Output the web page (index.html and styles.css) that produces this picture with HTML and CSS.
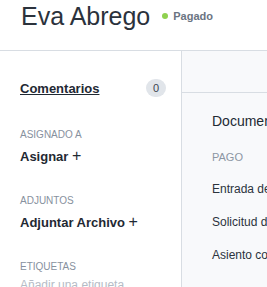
FILE: index.html
```html
<!DOCTYPE html>
<html lang="es">
<head>
    <meta charset="UTF-8">
    <title>Eva Abrego</title>
    <link rel="stylesheet" href="styles.css">
</head>
<body>
    <header class="page-header">
        <h1 class="page-title">Eva Abrego</h1>
        <span class="status"><span class="status-dot"></span>Pagado</span>
    </header>

    <div class="layout">
        <aside class="sidebar">
            <div class="comments-row">
                <a href="#" class="comments-link">Comentarios</a>
                <span class="badge">0</span>
            </div>

            <div class="side-section">
                <div class="side-label">ASIGNADO A</div>
                <a href="#" class="side-action">Asignar <span class="plus">+</span></a>
            </div>

            <div class="side-section">
                <div class="side-label">ADJUNTOS</div>
                <a href="#" class="side-action">Adjuntar Archivo <span class="plus">+</span></a>
            </div>

            <div class="side-section">
                <div class="side-label">ETIQUETAS</div>
                <div class="tag-placeholder">Añadir una etiqueta</div>
            </div>
        </aside>

        <main class="detail">
            <div class="detail-bar"></div>
            <div class="detail-body">
                <h2 class="detail-title">Documentos</h2>
                <div class="group-label">PAGO</div>
                <ul class="doc-list">
                    <li>Entrada de diario</li>
                    <li>Solicitud de pago</li>
                    <li>Asiento contable</li>
                </ul>
            </div>
        </main>
    </div>
</body>
</html>
```

FILE: styles.css
```css
html, body {
    margin: 0;
    padding: 0;
    font-family: "Liberation Sans", Arial, sans-serif;
    background-color: #fff;
    color: #1f2933;
    height: 100%;
    overflow: hidden;
}

.page-header {
    display: flex;
    align-items: center;
    height: 50px;
    padding: 0 0 0 21px;
    border-bottom: 1px solid #d8dde3;
    box-sizing: content-box;
}

.page-title {
    margin: 0;
    font-size: 25px;
    font-weight: 400;
    color: #2b323c;
    white-space: nowrap;
    position: relative;
    top: -9px;
}

.status {
    display: flex;
    align-items: center;
    margin-left: 12px;
    font-size: 11px;
    font-weight: 700;
    color: #6b7482;
    position: relative;
    top: -9px;
}

.status-dot {
    width: 6px;
    height: 6px;
    border-radius: 50%;
    background-color: #8fd14f;
    margin-right: 5px;
}

.layout {
    display: flex;
    height: 100%;
}

.sidebar {
    width: 182px;
    flex-shrink: 0;
    border-right: 1px solid #d8dde3;
    padding: 28px 15px 0 20px;
    box-sizing: border-box;
}

.comments-row {
    display: flex;
    align-items: center;
    justify-content: space-between;
    height: 18px;
}

.comments-link {
    font-size: 13px;
    font-weight: 700;
    color: #1f2933;
    text-decoration: underline;
}

.badge {
    min-width: 20px;
    height: 18px;
    line-height: 18px;
    border-radius: 9px;
    background-color: #e1e5ea;
    color: #3b4451;
    font-size: 11px;
    text-align: center;
}

.side-section {
    margin-top: 28px;
}

.comments-row + .side-section {
    margin-top: 31px;
}

.side-label {
    font-size: 10px;
    line-height: 14px;
    color: #87919e;
    margin-bottom: 6px;
}

.side-action {
    display: block;
    font-size: 13px;
    line-height: 18px;
    font-weight: 700;
    color: #1f2933;
    text-decoration: none;
    white-space: nowrap;
}

.plus {
    font-weight: 400;
    font-size: 16px;
    line-height: 1;
}

.tag-placeholder {
    font-size: 12px;
    line-height: 14px;
    color: #b5bcc6;
    margin-top: -2px;
}

.detail {
    flex: 1;
    background-color: #f8f9fb;
}

.detail-bar {
    height: 41px;
    border-bottom: 1px solid #d8dde3;
}

.detail-body {
    padding: 19px 0 0 30px;
    white-space: nowrap;
}

.detail-title {
    margin: 0;
    font-size: 14px;
    line-height: 18px;
    font-weight: 400;
    color: #222a33;
}

.group-label {
    margin-top: 20px;
    font-size: 11px;
    line-height: 14px;
    color: #8c96a3;
}

.doc-list {
    list-style: none;
    margin: 0;
    padding: 0;
}

.doc-list li {
    font-size: 12px;
    line-height: 16px;
    color: #2b333d;
    margin-top: 17px;
}
```
